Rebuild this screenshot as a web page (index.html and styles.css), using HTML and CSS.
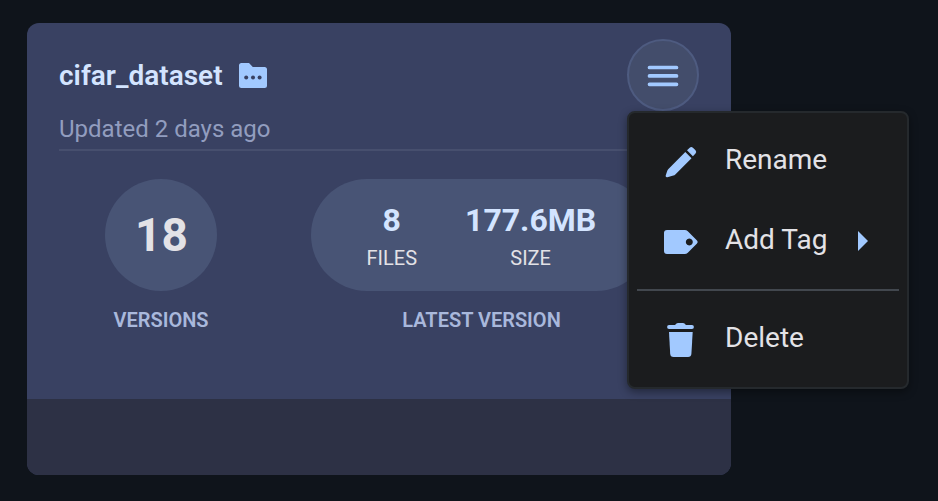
FILE: index.html
```html
<!DOCTYPE html>
<html lang="en">
<head>
<meta charset="utf-8">
<title>Dataset card</title>
<link rel="stylesheet" href="styles.css">
</head>
<body>
<article class="card">
  <div class="card-body">
    <header class="card-header">
      <div class="heading">
        <div class="title-row">
          <h1 class="title">cifar_dataset</h1>
          <svg class="folder" width="28" height="25" viewBox="0 0 28 25"><path fill="#a2c9ff" d="M2.500 0H10l3.800 4H25.500Q28 4 28 6.500V22.500Q28 25 25.500 25H2.500Q0 25 0 22.500V2.500Q0 0 2.500 0Z"/><g fill="#394162"><circle cx="7.200" cy="14.600" r="2"/><circle cx="14" cy="14.600" r="2"/><circle cx="20.600" cy="14.600" r="2"/></g></svg>
        </div>
        <p class="updated">Updated 2 days ago</p>
      </div>
      <button class="menu-button" aria-label="Menu">
        <svg width="32" height="22" viewBox="0 0 32 22" fill="none" stroke="#a2c9ff" stroke-width="3.700" stroke-linecap="round"><path d="M2.500 2.500h27M2.500 10.900h27M2.500 19.300h27"/></svg>
      </button>
    </header>
    <div class="stats">
      <section class="versions">
        <div class="count">18</div>
        <div class="caption">VERSIONS</div>
      </section>
      <section class="latest">
        <div class="pill">
          <div class="stat"><strong class="value">8</strong><span class="unit">FILES</span></div>
          <div class="stat"><strong class="value">177.6MB</strong><span class="unit">SIZE</span></div>
        </div>
        <div class="caption">LATEST VERSION</div>
      </section>
    </div>
  </div>
  <footer class="card-footer"></footer>
</article>
<nav class="menu">
  <div class="item">
    <svg class="icon icon-edit" width="36" height="36" viewBox="0 0 36 36" fill="#a2c9ff"><path d="M22.300 7.100L28.500 13.300L12.300 29.400Q11.500 30.200 10.400 30.500L4.300 32.200Q2.300 32.500 2.700 30.500L4.100 26.200Q4.400 25.100 5.200 24.300Z"/><path d="M24 5.300L26.700 2.700Q28.300 1.200 29.900 2.700L32.500 5.300Q34 7 32.500 8.500L29.900 11.200Z"/></svg>
    <span>Rename</span>
  </div>
  <div class="item">
    <svg class="icon icon-tag" width="36" height="36" viewBox="0 0 36 36"><path fill="#a2c9ff" fill-rule="evenodd" d="M4 6H21.700Q23.500 6 24.800 7.200L34 16.500Q35.500 18 34 19.500L24.800 28.800Q23.500 30 21.700 30H4Q1 30 1 27V9Q1 6 4 6ZM26.300 14.500a3.500 3.500 0 1 0 .01 0Z"/></svg>
    <span>Add Tag</span>
    <svg class="arrow" width="10" height="20" viewBox="0 0 10 20"><path fill="#a2c9ff" d="M0 0L10 10L0 20Z"/></svg>
  </div>
  <hr class="separator">
  <div class="item">
    <svg class="icon icon-delete" width="36" height="36" viewBox="1 0 36 36" fill="#a2c9ff"><path d="M7 3H13L14.500 1.500Q15 1 16 1H21Q22 1 22.500 1.500L24 3H30Q31.900 3 31.900 5T30 7H7Q5.100 7 5.100 5T7 3Z"/><path d="M7 10H30.700L29.400 31.800Q29.100 35 26 35H11.500Q8.400 35 8.200 31.800Z"/></svg>
    <span>Delete</span>
  </div>
</nav>
</body>
</html>
```

FILE: styles.css
```css
* { box-sizing: border-box; }
body {
  margin: 0;
  height: 501px;
  padding: 23px 0 0 27px;
  overflow: hidden;
  background: #0f141b;
  color: #e3e2e6;
  font-family: Roboto, "Liberation Sans", sans-serif;
}
.card {
  width: 704px;
  height: 452px;
  display: flex;
  flex-direction: column;
  border-radius: 12px;
  overflow: hidden;
  background: #394162;
}
.card-body { height: 376px; padding: 16px 32px 0; }
.card-footer { flex: 1; background: #2d3145; }
.card-header {
  display: flex;
  justify-content: space-between;
  height: 112px;
  border-bottom: 2px solid #474f6e;
}
.heading { padding-top: 21px; }
.title-row { display: flex; align-items: center; gap: 16px; height: 32px; }
.title {
  margin: 0;
  color: #d3e4ff;
  font-size: 28px;
  font-weight: 600;
  line-height: 32px;
}
.folder { margin-bottom: 1px; }
.updated {
  margin: 21px 0 0;
  color: #929dbf;
  font-size: 24px;
  line-height: 32px;
}
.menu-button {
  width: 72px;
  height: 72px;
  padding: 2px 0 0;
  display: flex;
  align-items: center;
  justify-content: center;
  border: 2px solid #4e5b80;
  border-radius: 50%;
  background: #434d6b;
}
.stats { display: flex; padding: 28px 0 0 46px; gap: 94px; }
.versions { width: 112px; }
.count, .pill {
  height: 112px;
  border-radius: 56px;
  background: #485475;
}
.count {
  display: flex;
  align-items: center;
  justify-content: center;
  padding-left: 1px;
  font-size: 46px;
  font-weight: 700;
}
.caption {
  margin-top: 17px;
  color: #a9b8dc;
  font-size: 20px;
  font-weight: 600;
  line-height: 24px;
  text-align: center;
}
.latest { width: 341px; }
.pill {
  display: flex;
  padding: 22px 0 0 55.5px;
  gap: 48px;
}
.stat { display: flex; flex-direction: column; align-items: center; }
.value { color: #d3e4ff; font-size: 32px; line-height: 38px; }
.unit { margin-top: 7px; font-size: 20px; line-height: 24px; }
.menu {
  position: absolute;
  left: 627px;
  top: 111px;
  width: 282px;
  height: 278px;
  padding: 8px;
  border: 2px solid #25292d;
  border-radius: 8px;
  background: #1b1c1e;
  box-shadow: 0 3px 8px rgba(0, 0, 0, .4);
}
.item {
  display: flex;
  align-items: center;
  height: 80px;
  padding: 0 31px 4px 26px;
  font-size: 28px;
}
.icon { margin: 5px 26px 0 0; flex: none; }
.icon-edit { margin-top: 7px; }
.arrow { margin: 3px 0 0 auto; }
.separator { height: 2px; margin: 8px 0; border: 0; background: #42474e; }
```
